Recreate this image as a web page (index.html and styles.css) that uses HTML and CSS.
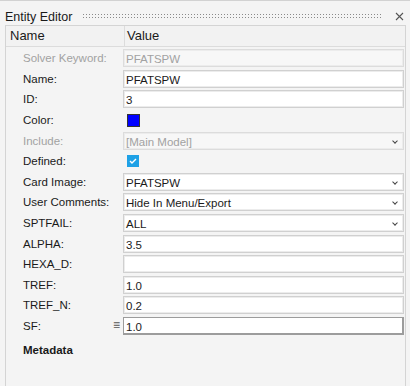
FILE: index.html
```html
<!DOCTYPE html>
<html lang="en">
<head>
  <meta charset="UTF-8">
  <title>Entity Editor</title>
  <link rel="stylesheet" href="styles.css">
</head>
<body>

  <div class="titlebar">
    <span class="title">Entity Editor</span>
    <div class="grip"></div>
    <svg class="close" width="9" height="9" viewBox="0 0 9 9">
      <path d="M1 1 L8 8 M8 1 L1 8" stroke="#555" stroke-width="1.1"/>
    </svg>
  </div>

  <div class="panel">
    <div class="header">
      <div class="col-name">Name</div>
      <div class="col-value">Value</div>
    </div>

    <div class="rows">
      <div class="row">
        <div class="label disabled">Solver Keyword:</div>
        <div class="field disabled">PFATSPW</div>
      </div>
      <div class="row">
        <div class="label">Name:</div>
        <div class="field">PFATSPW</div>
      </div>
      <div class="row">
        <div class="label">ID:</div>
        <div class="field">3</div>
      </div>
      <div class="row">
        <div class="label">Color:</div>
        <div class="plain"><span class="swatch"></span></div>
      </div>
      <div class="row">
        <div class="label disabled">Include:</div>
        <div class="field select disabled">[Main Model]<span class="arrow"></span></div>
      </div>
      <div class="row">
        <div class="label">Defined:</div>
        <div class="plain">
          <span class="check">
            <svg width="8" height="6" viewBox="0 0 8 6"><path d="M1 3 L3 5 L7 1" fill="none" stroke="#fff" stroke-width="1.4"/></svg>
          </span>
        </div>
      </div>
      <div class="row">
        <div class="label">Card Image:</div>
        <div class="field select">PFATSPW<span class="arrow"></span></div>
      </div>
      <div class="row">
        <div class="label">User Comments:</div>
        <div class="field select">Hide In Menu/Export<span class="arrow"></span></div>
      </div>
      <div class="row">
        <div class="label">SPTFAIL:</div>
        <div class="field select">ALL<span class="arrow"></span></div>
      </div>
      <div class="row">
        <div class="label">ALPHA:</div>
        <div class="field">3.5</div>
      </div>
      <div class="row">
        <div class="label">HEXA_D:</div>
        <div class="field"></div>
      </div>
      <div class="row">
        <div class="label">TREF:</div>
        <div class="field">1.0</div>
      </div>
      <div class="row">
        <div class="label">TREF_N:</div>
        <div class="field">0.2</div>
      </div>
      <div class="row">
        <div class="label">SF:<span class="menu-icon">&#8801;</span></div>
        <div class="field active">1.0</div>
      </div>
      <div class="row">
        <div class="label bold">Metadata</div>
        <div></div>
      </div>
    </div>
  </div>

</body>
</html>
```

FILE: styles.css
```css
body {
  font-family: "Liberation Sans", Arial, sans-serif;
  background-color: #f4f4f4;
  color: #1a1a1a;
  margin: 0;
  border-top: 1px solid #d2d2d2;
  height: 385px;
  overflow: hidden;
}

.titlebar {
  height: 24px;
  display: flex;
  align-items: center;
  padding: 0 5px;
}

.title {
  font-size: 12.5px;
  margin-top: 7px;
}

.grip {
  flex: 1;
  height: 6px;
  margin: 6px 12px 0 10px;
  background-image: radial-gradient(circle, #8a8a8a 0.8px, transparent 0.9px);
  background-size: 3px 3px;
}

.close {
  margin-top: 6px;
  margin-right: 1px;
}

.panel {
  margin: 0 4px 0 5px;
  border: 1px solid #d4d4d4;
  border-bottom: none;
  height: 360px;
  background-color: #f4f4f4;
}

.header {
  display: flex;
  height: 20px;
  border-bottom: 1px solid #dcdcdc;
  background-color: #f2f2f2;
  font-size: 13px;
}

.col-name {
  width: 114px;
  padding-left: 4px;
  border-right: 1px solid #dcdcdc;
  line-height: 20px;
}

.col-value {
  padding-left: 2px;
  line-height: 20px;
}

.rows {
  padding-top: 1px;
}

.row {
  display: grid;
  grid-template-columns: 117px 1fr;
  height: 20.6px;
  align-items: center;
  font-size: 11.5px;
}

.label {
  padding-left: 17px;
  position: relative;
}

.label.disabled, .field.disabled {
  color: #a2a2a2;
}

.label.bold {
  font-weight: bold;
  margin-top: 7px;
}

.menu-icon {
  position: absolute;
  right: 3px;
  top: -2px;
  font-size: 12px;
  color: #555;
}

.field {
  position: relative;
  height: 18px;
  line-height: 18px;
  margin-right: 1px;
  padding-left: 2px;
  background-color: white;
  border: 1px solid #d0d0d0;
  box-sizing: border-box;
  box-shadow: inset 0 0 0 1px #ececec;
}

.field.disabled {
  background-color: #f7f7f7;
  border-color: #dcdcdc;
}

.field.active {
  border: 1px solid #9c9c9c;
  border-right-width: 2px;
  border-bottom-width: 2px;
  box-shadow: none;
}

.arrow {
  position: absolute;
  right: 6px;
  top: 6px;
  width: 3px;
  height: 3px;
  border-right: 1.5px solid #444;
  border-bottom: 1.5px solid #444;
  transform: rotate(45deg);
}

.plain {
  display: flex;
  align-items: center;
  padding-left: 4px;
}

.swatch {
  width: 11px;
  height: 11px;
  background-color: #0000ff;
  border: 1px solid #333;
}

.check {
  width: 12px;
  height: 12px;
  background-color: #1ea1e6;
  display: flex;
  align-items: center;
  justify-content: center;
}
```
